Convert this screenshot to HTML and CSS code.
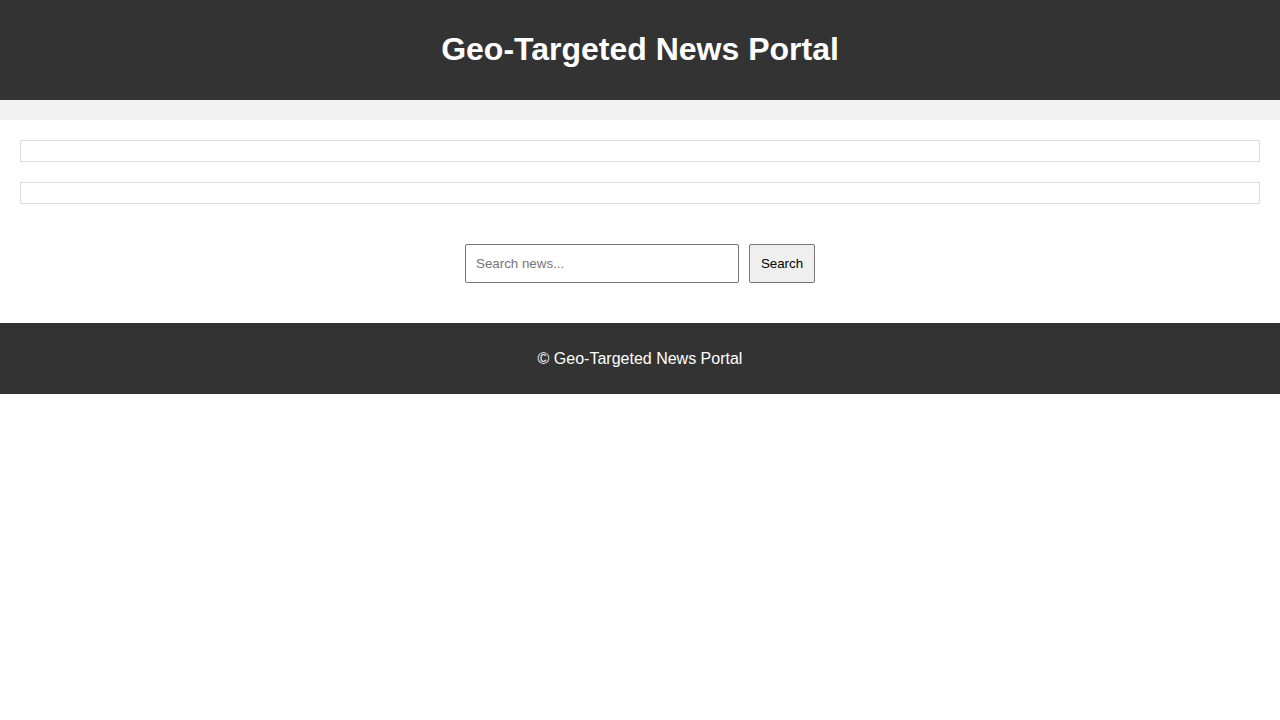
FILE: index.html
```html
<!DOCTYPE html>
<html lang="en">
<head>
<meta charset="utf-8">
<title>Geo-Targeted News Portal</title>
<link rel="stylesheet" href="styles.css">
</head>
<body>
<header class="site-header">
  <h1 class="site-title">Geo-Targeted News Portal</h1>
</header>
<nav class="site-nav"></nav>
<main class="content">
  <section class="news-box"></section>
  <section class="news-box"></section>
  <form class="search-form" onsubmit="return false;">
    <input class="search-input" type="text" placeholder="Search news...">
    <button class="search-button" type="submit">Search</button>
  </form>
</main>
<footer class="site-footer">
  <p class="footer-text">© Geo-Targeted News Portal</p>
</footer>
</body>
</html>
```
FILE: styles.css
```css
html, body {
  margin: 0;
  padding: 0;
  background: #fff;
  font-family: "Liberation Sans", Arial, sans-serif;
  color: #333;
}
.site-header {
  background: #333;
  color: #fff;
  padding: 19px 20px 21px;
  text-align: center;
}
.site-title {
  margin: 0;
  font-size: 32px;
  line-height: 60px;
  font-weight: bold;
}
.site-nav {
  background: #f2f2f2;
  height: 20px;
}
.content {
  padding: 20px;
}
.news-box {
  border: 1px solid #ddd;
  height: 20px;
  margin-bottom: 20px;
}
.search-form {
  display: flex;
  justify-content: center;
  gap: 10px;
  margin: 40px 0 20px;
}
.search-input {
  box-sizing: border-box;
  width: 274px;
  height: 39px;
  padding: 10px;
  font-family: "Liberation Sans", Arial, sans-serif;
  font-size: 13.33px;
  border: 1px solid #767676;
  border-radius: 2px;
  margin: 0;
}
.search-button {
  box-sizing: border-box;
  width: 66px;
  height: 39px;
  padding: 10px;
  font-family: "Liberation Sans", Arial, sans-serif;
  font-size: 13.33px;
  color: #000;
  background: #efefef;
  border: 1px solid #767676;
  border-radius: 2px;
  margin: 0;
}
.site-footer {
  background: #333;
  color: #fff;
  text-align: center;
  padding: 10px 0;
}
.footer-text {
  margin: 16px 0;
  font-size: 16px;
  line-height: 19px;
}
```
